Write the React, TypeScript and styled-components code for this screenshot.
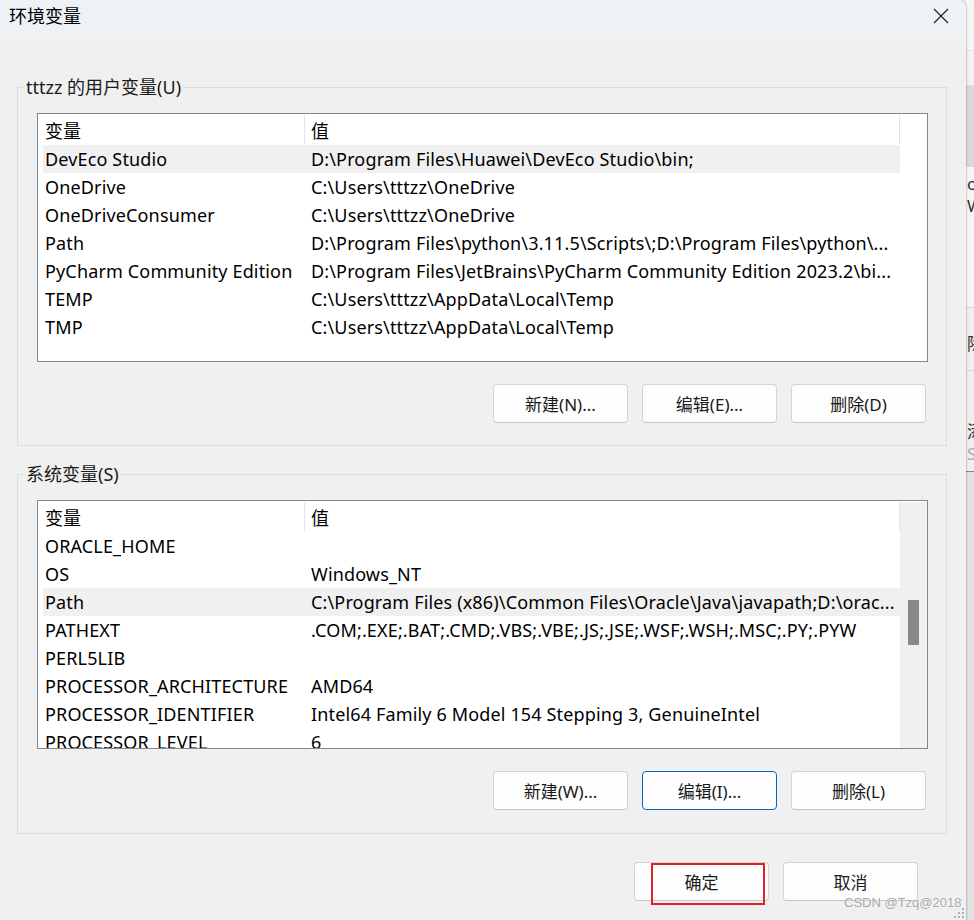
import React from "react";
import styled, { createGlobalStyle } from "styled-components";

const GlobalStyle = createGlobalStyle`
  html, body {
    margin: 0;
    padding: 0;
    background: #ececec;
  }
  body {
    font-family: "Noto Sans", "Noto Sans CJK SC", sans-serif;
    color: #000;
  }
`;

type EnvVar = { name: string; value: string; selected?: boolean };

const userVars: EnvVar[] = [
  { name: "DevEco Studio", value: "D:\\Program Files\\Huawei\\DevEco Studio\\bin;", selected: true },
  { name: "OneDrive", value: "C:\\Users\\tttzz\\OneDrive" },
  { name: "OneDriveConsumer", value: "C:\\Users\\tttzz\\OneDrive" },
  { name: "Path", value: "D:\\Program Files\\python\\3.11.5\\Scripts\\;D:\\Program Files\\python\\..." },
  { name: "PyCharm Community Edition", value: "D:\\Program Files\\JetBrains\\PyCharm Community Edition 2023.2\\bi..." },
  { name: "TEMP", value: "C:\\Users\\tttzz\\AppData\\Local\\Temp" },
  { name: "TMP", value: "C:\\Users\\tttzz\\AppData\\Local\\Temp" },
];

const systemVars: EnvVar[] = [
  { name: "ORACLE_HOME", value: "" },
  { name: "OS", value: "Windows_NT" },
  { name: "Path", value: "C:\\Program Files (x86)\\Common Files\\Oracle\\Java\\javapath;D:\\orac...", selected: true },
  { name: "PATHEXT", value: ".COM;.EXE;.BAT;.CMD;.VBS;.VBE;.JS;.JSE;.WSF;.WSH;.MSC;.PY;.PYW" },
  { name: "PERL5LIB", value: "" },
  { name: "PROCESSOR_ARCHITECTURE", value: "AMD64" },
  { name: "PROCESSOR_IDENTIFIER", value: "Intel64 Family 6 Model 154 Stepping 3, GenuineIntel" },
  { name: "PROCESSOR_LEVEL", value: "6" },
];

const Screen = styled.div`
  display: flex;
  width: 974px;
  height: 920px;
  overflow: hidden;
`;

const Dialog = styled.div`
  position: relative;
  flex: none;
  width: 966px;
  height: 920px;
  background: #f0f0f0;
  border-top-right-radius: 8px;
  box-shadow: 1px 0 2px rgba(0, 0, 0, 0.18);
  display: flex;
  flex-direction: column;
`;

const TitleBar = styled.div`
  height: 37px;
  flex: none;
  display: flex;
  align-items: center;
  justify-content: space-between;
  padding: 0 17px 0 9px;
  background: #eef2f6;
  border-top-right-radius: 8px;
`;

const Title = styled.span`
  font-size: 18px;
  line-height: 24px;
  margin-top: -6px;
`;

const CloseButton = styled.div`
  width: 16px;
  height: 16px;
  margin-top: -5px;
  display: flex;
`;

const Body = styled.div`
  display: flex;
  flex-direction: column;
  padding: 0 19px 0 17px;
`;

const Group = styled.fieldset<{ $top: number; $bottom: number }>`
  margin: ${(p) => p.$top}px 0 0 0;
  padding: 0;
  min-width: 0;
  border: 1px solid #dcdcdc;
  > div {
    padding: 14px 18px ${(p) => p.$bottom}px 19px;
  }
`;

const Legend = styled.legend`
  margin-left: 6px;
  padding: 0 2px;
  font-size: 18px;
  line-height: 24px;
  color: #1a1a1a;
`;

const ListBox = styled.div`
  height: 247px;
  border: 1px solid #828790;
  background: #fff;
  display: flex;
  overflow: hidden;
`;

const ListBody = styled.div`
  flex: 1;
  min-width: 0;
  padding-left: 5px;
`;

const HeaderRow = styled.div`
  display: grid;
  grid-template-columns: 262px 1fr;
  height: 31px;
  font-size: 18px;
`;

const HeaderCell = styled.div<{ $pad: number }>`
  display: flex;
  align-items: center;
  padding-left: ${(p) => p.$pad}px;
  border-right: 1px solid #e5e5e5;
  margin: 1px 0 1px;
`;

const Row = styled.div<{ $selected?: boolean }>`
  display: grid;
  grid-template-columns: 266px 1fr;
  height: 28px;
  padding-bottom: 1px;
  box-sizing: border-box;
  align-items: center;
  font-size: 18px;
  letter-spacing: 0.15px;
  background: ${(p) => (p.$selected ? "#f0f0f0" : "transparent")};
`;

const Cell = styled.div`
  padding-left: 2px;
  white-space: nowrap;
  overflow: hidden;
`;

const ScrollTrack = styled.div<{ $visible: boolean }>`
  width: 27px;
  flex: none;
  background: ${(p) => (p.$visible ? "#f0f0f0" : "#fff")};
  margin: 1px 0 0;
  display: flex;
  justify-content: center;
  padding-top: 98px;
`;

const ScrollThumb = styled.div`
  width: 11px;
  height: 45px;
  background: #888;
`;

const ButtonRow = styled.div`
  display: flex;
  justify-content: flex-end;
  gap: 14px;
  margin-top: 22px;
  padding-right: 2px;
`;

const Button = styled.div<{ $focused?: boolean }>`
  position: relative;
  width: 135px;
  height: 39px;
  box-sizing: border-box;
  display: flex;
  align-items: center;
  justify-content: center;
  background: #fdfdfd;
  border: 1px solid ${(p) => (p.$focused ? "#0067c0" : "#d3d3d3")};
  border-bottom-color: ${(p) => (p.$focused ? "#0067c0" : "#c4c4c4")};
  border-radius: 4px;
  font-size: 17px;
  color: #1a1a1a;
`;

const Footer = styled.div`
  display: flex;
  justify-content: flex-end;
  gap: 14px;
  margin-top: 28px;
  padding-right: 29px;
`;

const Highlight = styled.span`
  position: absolute;
  left: 16px;
  right: 3px;
  top: 0;
  bottom: -5px;
  border: 2.5px solid #e41e26;
`;

const Watermark = styled.span`
  position: absolute;
  left: 844px;
  top: 895px;
  font-family: "Liberation Sans", Arial, sans-serif;
  font-size: 13px;
  line-height: 16px;
  color: #a8a8a8;
  text-shadow: 0 0 2px #fff;
`;

const Grip = styled.svg`
  position: absolute;
  right: 2px;
  bottom: 2px;
`;

const BackStrip = styled.div`
  flex: 1;
  display: flex;
  flex-direction: column;
  overflow: hidden;
  font-size: 17px;
  color: #333;
`;

const StripPart = styled.div<{ $h: number; $bg: string; $line?: string }>`
  height: ${(p) => p.$h}px;
  flex: none;
  background: ${(p) => p.$bg};
  border-bottom: 1px solid ${(p) => p.$line || "transparent"};
  white-space: nowrap;
  overflow: hidden;
  line-height: 22px;
  padding-left: 1px;
`;

function VarList({ vars, scroll }: { vars: EnvVar[]; scroll?: boolean }) {
  return (
    <ListBox>
      <ListBody>
        <HeaderRow>
          <HeaderCell $pad={2}>变量</HeaderCell>
          <HeaderCell $pad={6}>值</HeaderCell>
        </HeaderRow>
        {vars.map((v) => (
          <Row key={v.name + v.value} $selected={v.selected}>
            <Cell>{v.name}</Cell>
            <Cell>{v.value}</Cell>
          </Row>
        ))}
      </ListBody>
      <ScrollTrack $visible={!!scroll}>{scroll && <ScrollThumb />}</ScrollTrack>
    </ListBox>
  );
}

export default function App() {
  return (
    <Screen>
      <GlobalStyle />
      <Dialog>
        <TitleBar>
          <Title>环境变量</Title>
          <CloseButton>
            <svg width="16" height="16" viewBox="0 0 16 16">
              <path d="M1 1 L15 15 M15 1 L1 15" stroke="#1a1a1a" strokeWidth="1.1" fill="none" />
            </svg>
          </CloseButton>
        </TitleBar>
        <Body>
          <Group $top={38} $bottom={22}>
            <Legend>tttzz 的用户变量(U)</Legend>
            <div>
              <VarList vars={userVars} />
              <ButtonRow>
                <Button>新建(N)...</Button>
                <Button>编辑(E)...</Button>
                <Button>删除(D)</Button>
              </ButtonRow>
            </div>
          </Group>
          <Group $top={16} $bottom={23}>
            <Legend>系统变量(S)</Legend>
            <div>
              <VarList vars={systemVars} scroll />
              <ButtonRow>
                <Button>新建(W)...</Button>
                <Button $focused>编辑(I)...</Button>
                <Button>删除(L)</Button>
              </ButtonRow>
            </div>
          </Group>
          <Footer>
            <Button>
              确定
              <Highlight />
            </Button>
            <Button>取消</Button>
          </Footer>
        </Body>
        <Watermark>CSDN @Tzq@2018</Watermark>
        <Grip width="10" height="10" viewBox="0 0 10 10">
          {[
            [8, 0],
            [8, 4],
            [4, 4],
            [8, 8],
            [4, 8],
            [0, 8],
          ].map(([x, y]) => (
            <rect key={`${x}-${y}`} x={x} y={y} width="2" height="2" fill="#b0b0b0" />
          ))}
        </Grip>
      </Dialog>
      <BackStrip>
        <StripPart $h={50} $bg="#f6f6f6" $line="#dedede" />
        <StripPart $h={34} $bg="#f3f3f3" $line="#dedede" />
        <StripPart $h={80} $bg="#dadada" />
        <StripPart $h={140} $bg="#f7f7f7" $line="#d8d8d8">
          <div style={{ height: 6 }} />
          or
          <br />W
        </StripPart>
        <StripPart $h={62} $bg="#f0f0f0" $line="#d8d8d8">
          <div style={{ height: 25 }} />除
        </StripPart>
        <StripPart $h={100} $bg="#efefef" $line="#8a8a8a">
          <div style={{ height: 50 }} />添
          <br />
          <span style={{ color: "#aaa" }}>SI</span>
        </StripPart>
        <StripPart $h={450} $bg="#e2e2e2" />
      </BackStrip>
    </Screen>
  );
}
